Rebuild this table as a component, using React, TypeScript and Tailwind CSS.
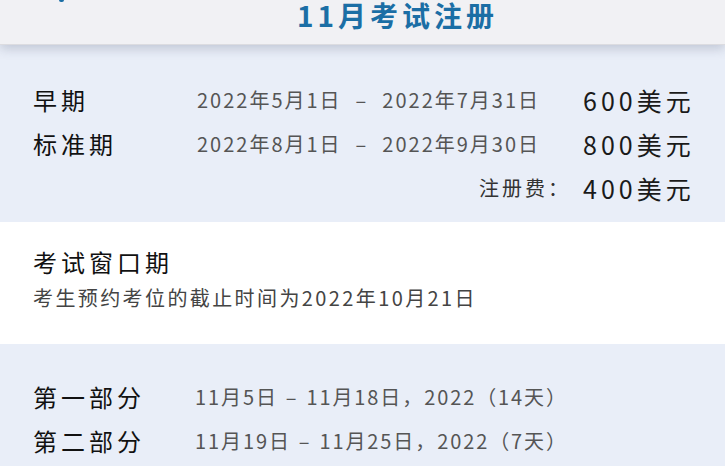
import React from "react";

const font = { fontFamily: '"Noto Sans CJK SC", "Noto Sans", sans-serif' };

function PriceRow({ label, from, to, price }: { label: string; from: string; to: string; price: string }) {
  return (
    <div className="flex items-center h-[44px]">
      <div className="w-[164px] text-[24px] leading-[32px] tracking-[4px] text-[#111]">{label}</div>
      <div className="flex-1 flex items-center text-[20px] leading-[28px] tracking-[2px] text-[#555]">
        <span>{from}</span>
        <span className="mx-[14px]">–</span>
        <span>{to}</span>
      </div>
      <div className="w-[142px] text-[25px] leading-[32px] tracking-[4px] text-[#1a1a1a]">{price}</div>
    </div>
  );
}

function PartRow({ label, from, to, rest }: { label: string; from: string; to: string; rest: string }) {
  return (
    <div className="flex items-center h-[44px]">
      <div className="w-[162px] text-[24px] leading-[32px] tracking-[4px] text-[#111]">{label}</div>
      <div className="flex items-center text-[20px] leading-[28px] tracking-[1.9px] text-[#555]">
        <span>{from}</span>
        <span className="mx-[8px]">–</span>
        <span>{to}</span>
        <span>{rest}</span>
      </div>
    </div>
  );
}

export default function App() {
  return (
    <div className="w-[725px] h-[466px] overflow-hidden bg-[#e9eef8]" style={font}>
      <div className="relative z-10 h-[45px] bg-[#f1f1f4] border-b border-[#dcdce0] shadow-[0_4px_10px_rgba(60,70,95,0.22)]">
        <div className="absolute left-[59px] top-[-2px] w-[5px] h-[4px] rounded-full bg-[#1b6ea5]" />
        <div className="pl-[297px] pt-[1px] text-[28px] leading-[28px] font-bold tracking-[4px] text-[#1b6ea5]">
          11月考试注册
        </div>
      </div>

      <div className="bg-[#e9eef8] pl-[33px] pt-[33px] pb-[12px]">
        <PriceRow label="早期" from="2022年5月1日" to="2022年7月31日" price="600美元" />
        <PriceRow label="标准期" from="2022年8月1日" to="2022年9月30日" price="800美元" />
        <div className="flex items-center justify-end h-[44px]">
          <div className="text-[20px] leading-[28px] tracking-[3px] text-[#333] mr-[12px]">注册费：</div>
          <div className="w-[142px] text-[25px] leading-[32px] tracking-[4px] text-[#1a1a1a]">400美元</div>
        </div>
      </div>

      <div className="bg-white h-[122px] pl-[33px] pt-[24px]">
        <div className="text-[24px] leading-[32px] tracking-[4px] text-[#111]">考试窗口期</div>
        <div className="mt-[6px] text-[20px] leading-[28px] tracking-[2.4px] text-[#444]">
          考生预约考位的截止时间为2022年10月21日
        </div>
      </div>

      <div className="bg-[#e9eef8] pl-[33px] pt-[31px]">
        <PartRow label="第一部分" from="11月5日" to="11月18日" rest="，2022（14天）" />
        <PartRow label="第二部分" from="11月19日" to="11月25日" rest="，2022（7天）" />
      </div>
    </div>
  );
}
